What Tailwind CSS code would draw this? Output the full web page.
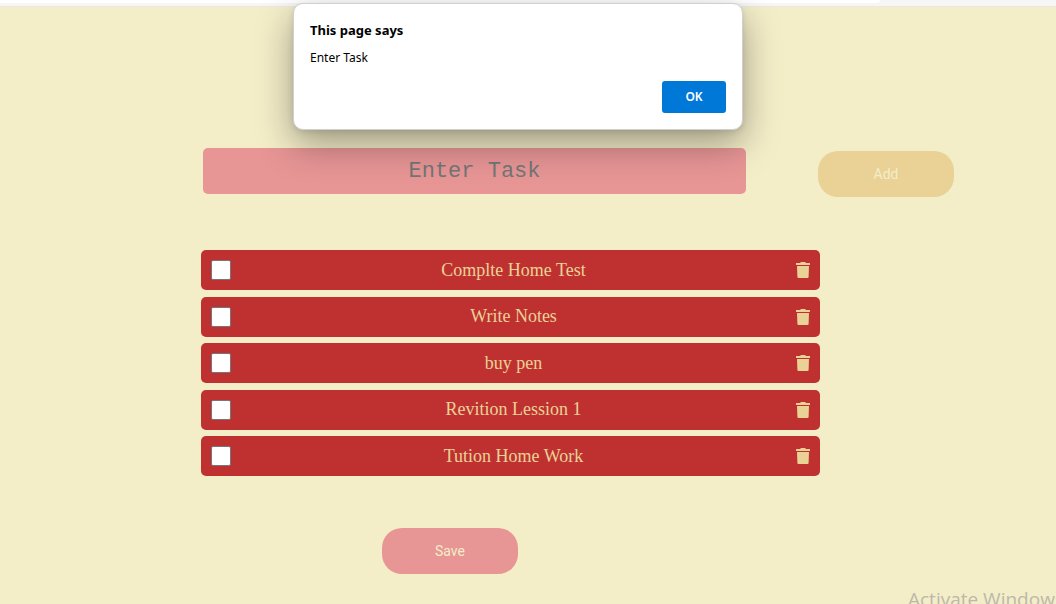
<!DOCTYPE html>
<html lang="en">
<head>
<meta charset="utf-8">
<meta name="viewport" content="width=device-width, initial-scale=1">
<title>To-do list</title>
<script src="https://cdn.jsdelivr.net/npm/@tailwindcss/browser@4"></script>
</head>
<body class="relative min-h-screen overflow-hidden bg-[#f3edc8] font-['Roboto',sans-serif]">
<svg class="hidden" aria-hidden="true">
  <symbol id="trash" viewBox="0 0 14 16">
    <path d="M4 1l1-1h4l1 1h4v2H0V1zM1 4h12l-.4 11q-.1 1-1 1H2.400q-.9 0-1-1z" fill="currentColor"/>
  </symbol>
</svg>

<header class="h-[7px] border-b border-[#e8e8e8] bg-[#f6f6f7]">
  <div class="mr-[176px] h-[3px] rounded-br-lg bg-white"></div>
</header>

<main class="pt-[141px]">
  <form class="flex items-start gap-[72px] pr-[102px] pl-[203px]">
    <input type="text" aria-label="Enter Task" placeholder="Enter Task" class="h-[46px] min-w-0 flex-1 rounded-[5px] bg-[#e79595] text-center font-['Liberation_Mono',monospace] text-[22px] text-[#757575] placeholder:text-[#757575]">
    <button type="button" class="mt-[3px] h-[46px] w-[136px] rounded-[20px] bg-[#ead196] text-sm text-[#f3edc8]">Add</button>
  </form>

  <ul class="mt-[53px] mr-[236px] ml-[201px] flex min-h-[226px] flex-col justify-between font-['Liberation_Serif',serif] text-[18px] text-[#ead196]">
    <li class="flex h-10 items-center rounded-[5px] bg-[#bf3131] px-2.5">
      <input id="t1" type="checkbox" class="size-5 appearance-none rounded-[2px] border border-[#767676] bg-white checked:bg-[#0078d7]">
      <label for="t1" class="flex-1 text-center">Complte Home Test</label>
      <button type="button" aria-label="Delete Complte Home Test"><svg class="h-4 w-3.5"><use href="#trash"/></svg></button>
    </li>
    <li class="flex h-10 items-center rounded-[5px] bg-[#bf3131] px-2.5">
      <input id="t2" type="checkbox" class="size-5 appearance-none rounded-[2px] border border-[#767676] bg-white checked:bg-[#0078d7]">
      <label for="t2" class="flex-1 text-center">Write Notes</label>
      <button type="button" aria-label="Delete Write Notes"><svg class="h-4 w-3.5"><use href="#trash"/></svg></button>
    </li>
    <li class="flex h-10 items-center rounded-[5px] bg-[#bf3131] px-2.5">
      <input id="t3" type="checkbox" class="size-5 appearance-none rounded-[2px] border border-[#767676] bg-white checked:bg-[#0078d7]">
      <label for="t3" class="flex-1 text-center">buy pen</label>
      <button type="button" aria-label="Delete buy pen"><svg class="h-4 w-3.5"><use href="#trash"/></svg></button>
    </li>
    <li class="flex h-10 items-center rounded-[5px] bg-[#bf3131] px-2.5">
      <input id="t4" type="checkbox" class="size-5 appearance-none rounded-[2px] border border-[#767676] bg-white checked:bg-[#0078d7]">
      <label for="t4" class="flex-1 text-center">Revition Lession 1</label>
      <button type="button" aria-label="Delete Revition Lession 1"><svg class="h-4 w-3.5"><use href="#trash"/></svg></button>
    </li>
    <li class="flex h-10 items-center rounded-[5px] bg-[#bf3131] px-2.5">
      <input id="t5" type="checkbox" class="size-5 appearance-none rounded-[2px] border border-[#767676] bg-white checked:bg-[#0078d7]">
      <label for="t5" class="flex-1 text-center">Tution Home Work</label>
      <button type="button" aria-label="Delete Tution Home Work"><svg class="h-4 w-3.5"><use href="#trash"/></svg></button>
    </li>
  </ul>

  <div class="mt-[52px] mr-[156px] flex justify-center">
    <button type="button" class="h-[46px] w-[136px] rounded-[20px] bg-[#e79595] text-sm text-[#f3edc8]">Save</button>
  </div>
</main>

<dialog open aria-labelledby="dialog-title" class="absolute top-[3px] left-[293px] w-[450px] rounded-[10px] border border-[#d0d0d0] bg-white px-4 pt-4 pb-4 font-['Noto_Sans',sans-serif] text-black shadow-[0_14px_36px_rgba(0,0,0,0.35),0_2px_6px_rgba(0,0,0,0.1)]">
  <h1 id="dialog-title" class="text-[13px] leading-5 font-bold">This page says</h1>
  <p class="mt-2 text-xs leading-5">Enter Task</p>
  <div class="mt-[13px] flex justify-end">
    <button type="button" class="h-8 w-16 rounded-[3px] bg-[#0078d7] text-xs font-semibold text-white">OK</button>
  </div>
</dialog>

<p class="absolute top-[585px] left-[908px] text-[19px] leading-7 whitespace-nowrap text-[#bcb9a9] font-['Open_Sans',sans-serif]">Activate Windows</p>
</body>
</html>
